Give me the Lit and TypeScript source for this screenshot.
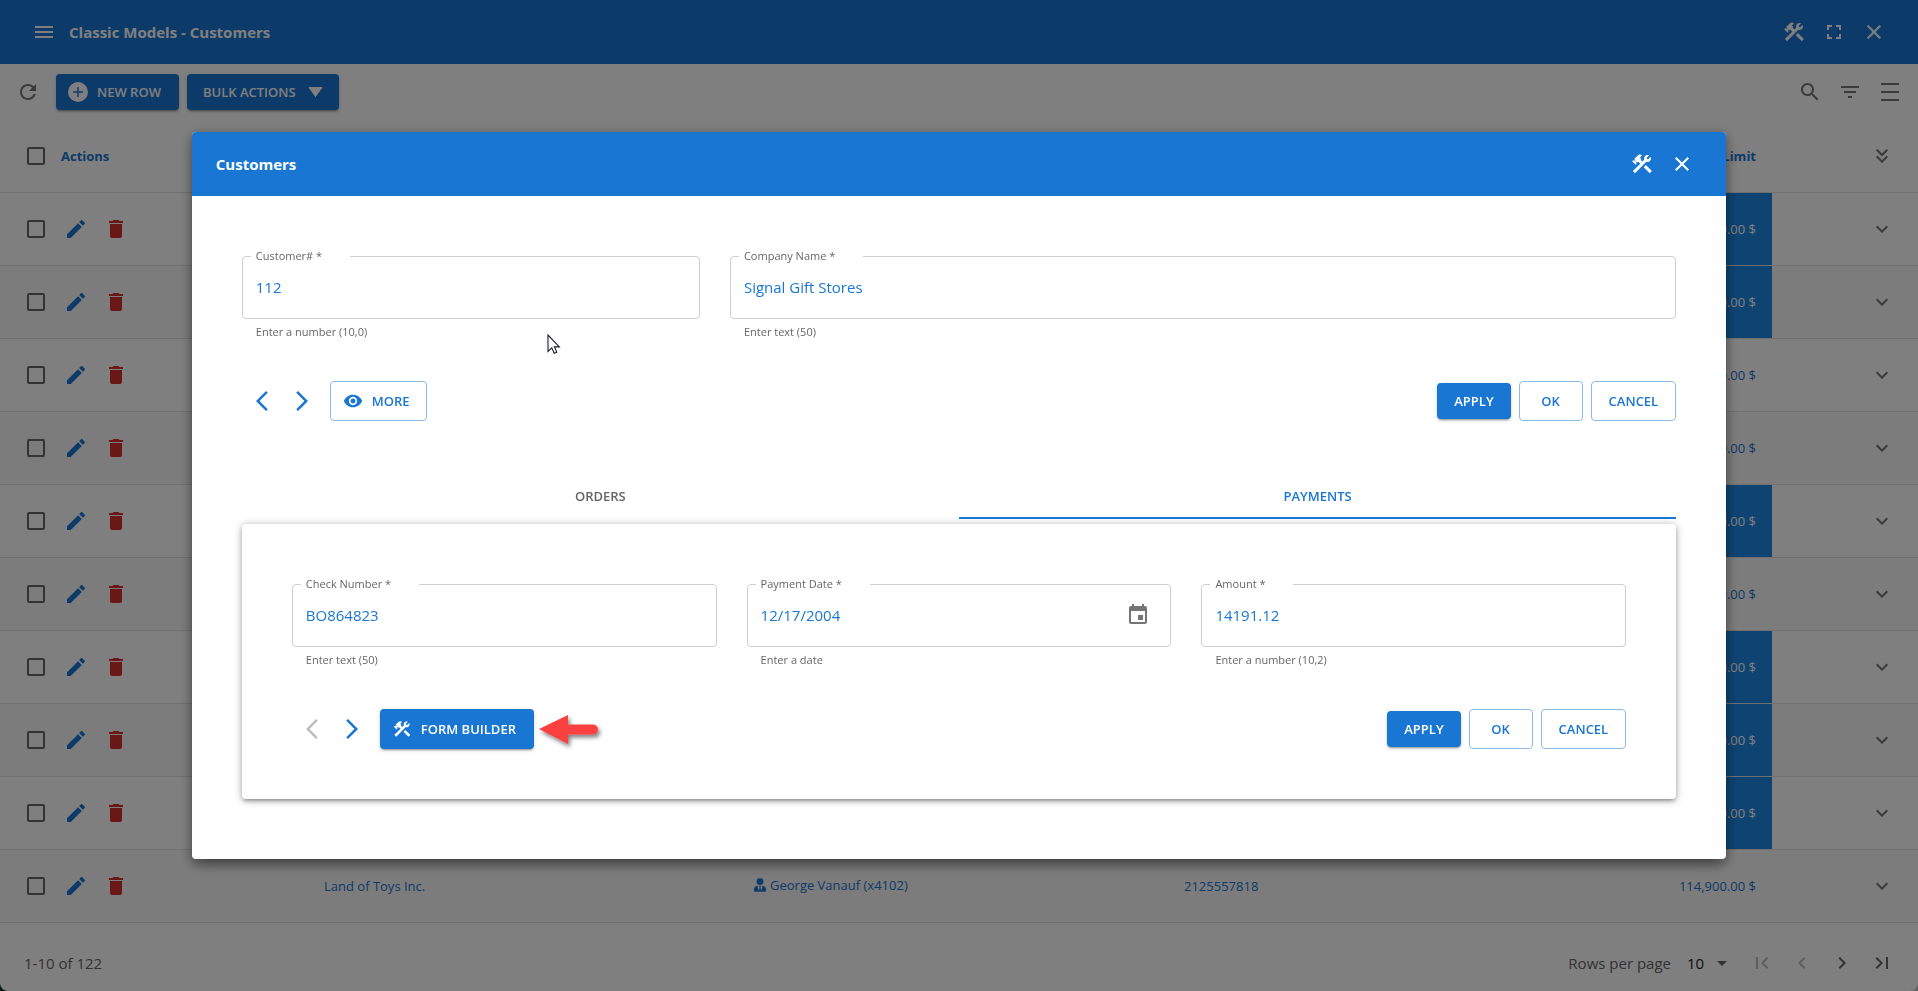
import { LitElement, html, svg, css, nothing } from "lit";
import { customElement, state } from "lit/decorators.js";
import { classMap } from "lit/directives/class-map.js";

const ICONS: Record<string, string> = {
  menu: "M3 18h18v-2H3v2zm0-5h18v-2H3v2zm0-7v2h18V6H3z",
  tools:
    "m13.7826 15.1719 2.1213-2.1213 5.9963 5.9962-2.1213 2.1213zM17.5 10c1.93 0 3.5-1.57 3.5-3.5 0-.58-.16-1.12-.41-1.6l-2.7 2.7-1.49-1.49 2.7-2.7c-.48-.25-1.02-.41-1.6-.41C15.57 3 14 4.57 14 6.5c0 .41.08.8.21 1.16l-1.85 1.85-1.78-1.78.71-.71-1.41-1.41L12 3.49c-1.17-1.17-3.07-1.17-4.24 0L4.22 7.03l1.41 1.41H2.81l-.71.71 3.54 3.54.71-.71V9.15l1.41 1.41.71-.71 1.78 1.78-7.41 7.41 2.12 2.12L16.34 9.79c.36.13.75.21 1.16.21z",
  fullscreen: "M7 14H5v5h5v-2H7v-3zm-2-4h2V7h3V5H5v5zm12 7h-3v2h5v-5h-2v3zM14 5v2h3v3h2V5h-5z",
  close: "M19 6.41 17.59 5 12 10.59 6.41 5 5 6.41 10.59 12 5 17.59 6.41 19 12 13.41 17.59 19 19 17.59 13.41 12z",
  refresh:
    "M17.65 6.35C16.2 4.9 14.21 4 12 4c-4.42 0-7.99 3.58-7.99 8s3.57 8 7.99 8c3.73 0 6.84-2.55 7.73-6h-2.08c-.82 2.33-3.04 4-5.65 4-3.31 0-6-2.69-6-6s2.69-6 6-6c1.66 0 3.14.69 4.22 1.78L13 11h7V4l-2.35 2.35z",
  search:
    "M15.5 14h-.79l-.28-.27C15.41 12.59 16 11.11 16 9.5 16 5.91 13.09 3 9.5 3S3 5.91 3 9.5 5.91 16 9.5 16c1.61 0 3.09-.59 4.23-1.57l.27.28v.79l5 4.99L20.49 19l-4.99-5zm-6 0C7.01 14 5 11.99 5 9.5S7.01 5 9.5 5 14 7.01 14 9.5 11.99 14 9.5 14z",
  filter: "M10 18h4v-2h-4v2zM3 6v2h18V6H3zm3 7h12v-2H6v2z",
  density: "M3 3h18v2H3zM3 11h18v2H3zM3 19h18v2H3z",
  edit: "M3 17.25V21h3.75L17.81 9.94l-3.75-3.75L3 17.25zM20.71 7.04c.39-.39.39-1.02 0-1.41l-2.34-2.34a.9959.9959 0 0 0-1.41 0l-1.83 1.83 3.75 3.75 1.83-1.83z",
  trash: "M6 19c0 1.1.9 2 2 2h8c1.1 0 2-.9 2-2V7H6v12zM19 4h-3.5l-1-1h-5l-1 1H5v2h14V4z",
  down: "M7.41 8.59 12 13.17l4.59-4.58L18 10l-6 6-6-6 1.41-1.41z",
  doubleDown: "M18 6.41 16.59 5 12 9.58 7.41 5 6 6.41l6 6zM18 13l-1.41-1.41L12 16.17l-4.59-4.58L6 13l6 6z",
  first: "M18.41 16.59 13.82 12l4.59-4.59L17 6l-6 6 6 6zM6 6h2v12H6z",
  prev: "M15.41 16.59 10.83 12l4.58-4.59L14 6l-6 6 6 6z",
  next: "M8.59 16.59 13.17 12 8.59 7.41 10 6l6 6-6 6-1.41-1.41z",
  last: "M5.59 7.41 10.18 12l-4.59 4.59L7 18l6-6-6-6zM16 6h2v12h-2z",
  caret: "m7 10 5 5 5-5z",
  back: "M17.77 3.77 16 2 6 12l10 10 1.77-1.77L9.54 12z",
  forward: "M6.23 20.23 8 22l10-10L8 2 6.23 3.77 14.46 12z",
  eye: "M12 4.5C7 4.5 2.73 7.61 1 12c1.73 4.39 6 7.5 11 7.5s9.27-3.11 11-7.5c-1.73-4.39-6-7.5-11-7.5zM12 17c-2.76 0-5-2.24-5-5s2.24-5 5-5 5 2.24 5 5-2.24 5-5 5zm0-8c-1.66 0-3 1.34-3 3s1.34 3 3 3 3-1.34 3-3-1.34-3-3-3z",
  event:
    "M17 12h-5v5h5v-5zM16 1v2H8V1H6v2H5c-1.11 0-1.99.9-1.99 2L3 19c0 1.1.89 2 2 2h14c1.1 0 2-.9 2-2V5c0-1.1-.9-2-2-2h-1V1h-2zm3 18H5V8h14v11z",
};

const icon = (name: string, size = 24) => html`<svg
  class="icon"
  width=${size}
  height=${size}
  viewBox="0 0 24 24"
  aria-hidden="true"
>
  ${svg`<path d=${ICONS[name]}></path>`}
</svg>`;

const iconButton = (name: string, label: string, cls = "") => html`<button
  type="button"
  class="icon-button ${cls}"
  aria-label=${label}
>
  ${icon(name)}
</button>`;

interface Customer {
  name?: string;
  rep?: string;
  phone?: string;
  limit: number;
}

const CUSTOMERS: Customer[] = [
  { limit: 21000 },
  { limit: 71800 },
  { limit: 117300 },
  { limit: 118200 },
  { limit: 81700 },
  { limit: 210500 },
  { limit: 0 },
  { limit: 59700 },
  { limit: 64600 },
  { name: "Land of Toys Inc.", rep: "George Vanauf (x4102)", phone: "2125557818", limit: 114900 },
];

const money = (n: number) => n.toLocaleString("en-US", { minimumFractionDigits: 2 }) + " $";

@customElement("app-root")
export class AppRoot extends LitElement {
  @state() private tab: "orders" | "payments" = "payments";

  static styles = css`
    :host {
      display: block;
      min-height: 100vh;
      background: linear-gradient(90deg, #12302f 50%, #c8c8c8 50%);
      font-family: "Segoe UI", "Open Sans", "Noto Sans", sans-serif;
      font-size: 13px;
      color: #1976d2;
    }
    * {
      box-sizing: border-box;
    }
    button,
    input,
    select {
      font: inherit;
      color: inherit;
      background: none;
      border: 0;
      margin: 0;
      padding: 0;
    }
    button {
      cursor: pointer;
    }
    .icon {
      display: block;
      flex: none;
      fill: currentColor;
    }
    .icon-button {
      display: inline-flex;
      align-items: center;
      justify-content: center;
      width: 40px;
      height: 40px;
      color: inherit;
      vertical-align: middle;
    }
    .faded {
      color: #bdbdbd;
    }
    .spacer {
      flex: 1;
    }

    .page {
      display: flex;
      flex-direction: column;
      min-height: 100vh;
      background: #fff;
      border-radius: 0 0 8px 8px;
      overflow: hidden;
    }
    .appbar {
      display: flex;
      align-items: center;
      height: 64px;
      padding: 0 24px;
      background: #1976d2;
      color: #fff;
    }
    .title {
      margin: 0 0 0 5px;
      font-size: 15px;
      font-weight: 700;
    }
    .toolbar {
      display: flex;
      align-items: center;
      height: 56px;
      padding: 0 8px;
      color: #757575;
    }
    .toolbar .button {
      margin-left: 8px;
    }

    .button {
      display: inline-flex;
      align-items: center;
      justify-content: center;
      height: 40px;
      padding: 0 17px;
      border-radius: 4px;
      font-weight: 600;
      white-space: nowrap;
    }
    .contained {
      background: #1976d2;
      color: #fff;
      box-shadow: 0 3px 1px -2px rgba(0, 0, 0, 0.2), 0 2px 2px rgba(0, 0, 0, 0.14),
        0 1px 5px rgba(0, 0, 0, 0.12);
    }
    .outlined {
      border: 1px solid #8cbae8;
    }
    .short {
      height: 36px;
    }
    .with-icon {
      gap: 9px;
      padding: 0 16px 0 12px;
    }
    .contained.with-icon {
      padding-right: 18px;
    }
    .with-caret {
      gap: 12px;
      padding: 0 16px;
    }

    .grid {
      width: 100%;
      table-layout: fixed;
      border-collapse: separate;
      border-spacing: 0;
    }
    .col-lead {
      width: 308px;
    }
    .col-limit {
      width: 174px;
    }
    .col-expand {
      width: 146px;
    }
    .grid th,
    .grid td {
      height: 73px;
      padding: 0 16px;
      border-bottom: 1px solid #e0e0e0;
      text-align: left;
    }
    .grid tbody tr:nth-child(even) {
      background: #f8f8f8;
    }
    .grid .limit {
      text-align: right;
    }
    .grid .low {
      background: #1e88e5;
      color: #fff;
    }
    .grid .expand {
      text-align: right;
      color: #757575;
    }
    .grid .lead {
      padding-left: 27px;
    }
    .lead-inner {
      display: flex;
      align-items: center;
    }
    .lead-inner .icon-button:first-of-type {
      margin-left: 11px;
    }
    .lead-inner .actions {
      margin-left: 16px;
    }
    .danger {
      color: #d32f2f;
    }
    .check {
      appearance: none;
      width: 18px;
      height: 18px;
      border: 2px solid #666;
      border-radius: 2px;
    }
    .person {
      display: inline-flex;
      align-items: center;
      gap: 4px;
    }

    .footer {
      display: flex;
      align-items: center;
      flex: 1;
      padding: 12px 16px 0 24px;
      font-size: 15px;
      color: #666;
    }
    .rows-label {
      display: flex;
      align-items: center;
    }
    .rows-select {
      appearance: none;
      width: 22px;
      margin-left: 16px;
      color: #212121;
    }
    .rows-label .icon {
      margin-left: 1px;
      margin-right: 8px;
    }
    .pager {
      color: #666;
      display: flex;
    }

    .overlay {
      position: fixed;
      inset: 0;
      display: flex;
      align-items: center;
      justify-content: center;
      background: rgba(0, 0, 0, 0.5);
    }
    .dialog {
      position: relative;
      width: 80%;
      background: #fff;
      border-radius: 4px;
      box-shadow: 0 11px 15px -7px rgba(0, 0, 0, 0.2), 0 4px 12px 1px rgba(0, 0, 0, 0.4);
    }
    .dialog .appbar {
      border-radius: 4px 4px 0 0;
    }
    .dialog .title {
      margin-left: 0;
    }
    .body {
      padding: 50px 50px 60px;
    }
    .fields {
      display: grid;
      grid-template-columns: repeat(3, 1fr);
      gap: 30px;
    }
    .wide {
      grid-column: span 2;
    }
    .outline {
      min-width: 0;
      margin: 0;
      padding: 0 12px 0 8px;
      border: 1px solid #cfcfcf;
      border-radius: 4px;
      display: block;
    }
    .legend {
      padding: 0 28px 0 5px;
      font-size: 11px;
      line-height: 20px;
      color: #666;
    }
    .value-row {
      display: flex;
      align-items: center;
      height: 52px;
      padding: 0 0 10px 5px;
    }
    .value {
      flex: 1;
      min-width: 0;
      height: 24px;
      font-size: 15px;
      outline: none;
    }
    .value-row .icon-button {
      color: #757575;
    }
    .hint {
      margin: 3px 14px 0;
      font-size: 11px;
      line-height: 20px;
      color: #666;
    }
    .bar {
      display: flex;
      align-items: center;
      margin-top: 39px;
    }
    .bar .main {
      margin-left: 8px;
    }
    .group {
      display: flex;
      align-items: center;
      gap: 8px;
    }
    .group .button {
      min-width: 64px;
    }
    .tabs {
      display: flex;
      margin: 50px 0 5px;
    }
    .tab {
      flex: 1;
      height: 48px;
      padding-top: 3px;
      border-bottom: 2px solid transparent;
      font-weight: 600;
      color: #666;
    }
    .tab.selected {
      color: #1976d2;
      border-bottom-color: #1976d2;
    }
    .panel {
      padding: 50px;
      border-radius: 4px;
      box-shadow: 0 3px 3px -2px rgba(0, 0, 0, 0.2), 0 3px 4px rgba(0, 0, 0, 0.14),
        0 1px 8px rgba(0, 0, 0, 0.3);
    }
    .nav {
      display: flex;
      align-items: center;
    }
    .callout {
      position: relative;
    }
    .arrow {
      position: absolute;
      left: 100%;
      top: 2px;
    }
    .cursor {
      position: absolute;
      left: 355px;
      top: 202px;
    }
  `;

  private field(id: string, label: string, value: string, hint: string, opts: { wide?: boolean; date?: boolean } = {}) {
    return html`<div class=${classMap({ wide: !!opts.wide })}>
      <fieldset class="outline">
        <legend class="legend"><label for=${id}>${label} *</label></legend>
        <div class="value-row">
          <input id=${id} class="value" type="text" .value=${value} aria-describedby="${id}-hint" />
          ${opts.date ? iconButton("event", "Choose date") : nothing}
        </div>
      </fieldset>
      <p class="hint" id="${id}-hint">${hint}</p>
    </div>`;
  }

  private submitGroup() {
    return html`<div class="group">
      <button type="button" class="button contained short">APPLY</button>
      <button type="button" class="button outlined">OK</button>
      <button type="button" class="button outlined">CANCEL</button>
    </div>`;
  }

  private row(c: Customer) {
    return html`<tr>
      <td class="lead">
        <div class="lead-inner">
          <input type="checkbox" class="check" aria-label="Select row" />
          ${iconButton("edit", "Edit")} ${iconButton("trash", "Delete", "danger")}
        </div>
      </td>
      <td>${c.name ?? nothing}</td>
      <td>
        ${c.rep
          ? html`<span class="person">
              <svg class="icon" width="12" height="14" viewBox="0 0 448 512" aria-hidden="true">
                <path
                  d="M224 256a128 128 0 1 0 0-256 128 128 0 1 0 0 256zm95.8 32.6L272 480l-32-136 32-56h-96l32 56-32 136-47.8-191.4C56.9 292 0 350.3 0 422.4V464c0 26.5 21.5 48 48 48h352c26.5 0 48-21.5 48-48v-41.6c0-72.1-56.9-130.4-128.2-133.8z"
                ></path></svg
              >${c.rep}</span
            >`
          : nothing}
      </td>
      <td>${c.phone ?? nothing}</td>
      <td class=${classMap({ limit: true, low: c.limit < 100000 })}>${money(c.limit)}</td>
      <td class="expand">${iconButton("down", "Expand row")}</td>
    </tr>`;
  }

  private page() {
    return html`<div class="page">
      <header class="appbar">
        ${iconButton("menu", "Menu")}
        <h1 class="title">Classic Models - Customers</h1>
        <span class="spacer"></span>
        ${iconButton("tools", "Builder")} ${iconButton("fullscreen", "Full screen")} ${iconButton("close", "Close")}
      </header>
      <div class="toolbar">
        ${iconButton("refresh", "Refresh")}
        <button type="button" class="button contained short with-icon">
          <svg width="20" height="20" viewBox="0 0 20 20" aria-hidden="true">
            <circle cx="10" cy="10" r="10" fill="#fff"></circle>
            <path d="M10 5v10M5 10h10" stroke="#1976d2" stroke-width="1.4"></path></svg
          >NEW ROW
        </button>
        <button type="button" class="button contained short with-caret">
          BULK ACTIONS
          <svg width="15" height="10" viewBox="0 0 15 10" aria-hidden="true">
            <path d="M1 .5h13L7.5 9.5z" fill="#fff" stroke="#fff" stroke-linejoin="round"></path>
          </svg>
        </button>
        <span class="spacer"></span>
        ${iconButton("search", "Search")} ${iconButton("filter", "Filter")} ${iconButton("density", "Density")}
      </div>
      <table class="grid">
        <colgroup>
          <col class="col-lead" />
          <col />
          <col />
          <col />
          <col class="col-limit" />
          <col class="col-expand" />
        </colgroup>
        <thead>
          <tr>
            <th class="lead">
              <div class="lead-inner">
                <input type="checkbox" class="check" aria-label="Select all" /><span class="actions">Actions</span>
              </div>
            </th>
            <th></th>
            <th></th>
            <th></th>
            <th class="limit">Credit Limit</th>
            <th class="expand">${iconButton("doubleDown", "Expand all")}</th>
          </tr>
        </thead>
        <tbody>
          ${CUSTOMERS.map((c) => this.row(c))}
        </tbody>
      </table>
      <footer class="footer">
        <span>1-10 of 122</span>
        <span class="spacer"></span>
        <label class="rows-label"
          >Rows per page
          <select class="rows-select">
            <option>10</option>
          </select>
          ${icon("caret")}
        </label>
        <div class="pager">
          ${iconButton("first", "First page", "faded")} ${iconButton("prev", "Previous page", "faded")}
          ${iconButton("next", "Next page")} ${iconButton("last", "Last page")}
        </div>
      </footer>
    </div>`;
  }

  private tabButton(id: "orders" | "payments", label: string) {
    return html`<button
      type="button"
      role="tab"
      class=${classMap({ tab: true, selected: this.tab === id })}
      aria-selected=${this.tab === id}
      @click=${() => (this.tab = id)}
    >
      ${label}
    </button>`;
  }

  render() {
    return html`${this.page()}
      <div class="overlay">
        <section class="dialog" role="dialog" aria-label="Customers">
          <header class="appbar">
            <h2 class="title">Customers</h2>
            <span class="spacer"></span>
            ${iconButton("tools", "Form builder")} ${iconButton("close", "Close")}
          </header>
          <div class="body">
            <div class="fields">
              ${this.field("customer", "Customer#", "112", "Enter a number (10,0)")}
              ${this.field("company", "Company Name", "Signal Gift Stores", "Enter text (50)", { wide: true })}
            </div>
            <div class="bar">
              <div class="nav">
                ${iconButton("back", "Previous customer")} ${iconButton("forward", "Next customer")}
              </div>
              <button type="button" class="button outlined with-icon main">${icon("eye", 20)}MORE</button>
              <span class="spacer"></span>
              ${this.submitGroup()}
            </div>
            <div class="tabs" role="tablist">
              ${this.tabButton("orders", "ORDERS")} ${this.tabButton("payments", "PAYMENTS")}
            </div>
            <div class="panel" role="tabpanel">
              <div class="fields">
                ${this.field("check", "Check Number", "BO864823", "Enter text (50)")}
                ${this.field("date", "Payment Date", "12/17/2004", "Enter a date", { date: true })}
                ${this.field("amount", "Amount", "14191.12", "Enter a number (10,2)")}
              </div>
              <div class="bar">
                <div class="nav">
                  ${iconButton("back", "Previous payment", "faded")} ${iconButton("forward", "Next payment")}
                </div>
                <div class="callout main">
                  <button type="button" class="button contained with-icon">${icon("tools", 20)}FORM BUILDER</button>
                  <svg class="arrow" width="72" height="44" viewBox="0 0 72 44" aria-hidden="true">
                    <defs>
                      <filter id="shade" x="-20%" y="-20%" width="150%" height="160%">
                        <feDropShadow dx="2" dy="3" stdDeviation="2" flood-opacity="0.5"></feDropShadow>
                      </filter>
                    </defs>
                    <path
                      d="M5 18 34 4v9.5h25a5 5 0 0 1 0 10H34V33z"
                      fill="#fb4141"
                      filter="url(#shade)"
                    ></path>
                  </svg>
                </div>
                <span class="spacer"></span>
                ${this.submitGroup()}
              </div>
            </div>
          </div>
          <svg class="cursor" width="14" height="21" viewBox="0 0 14 21" aria-hidden="true">
            <path
              d="M1 1v16.5l3.8-3.6 2.4 5.4 2.6-1.1-2.4-5.3h5z"
              fill="#fff"
              stroke="#1a1a2a"
              stroke-width="1.1"
            ></path>
          </svg>
        </section>
      </div>`;
  }
}
